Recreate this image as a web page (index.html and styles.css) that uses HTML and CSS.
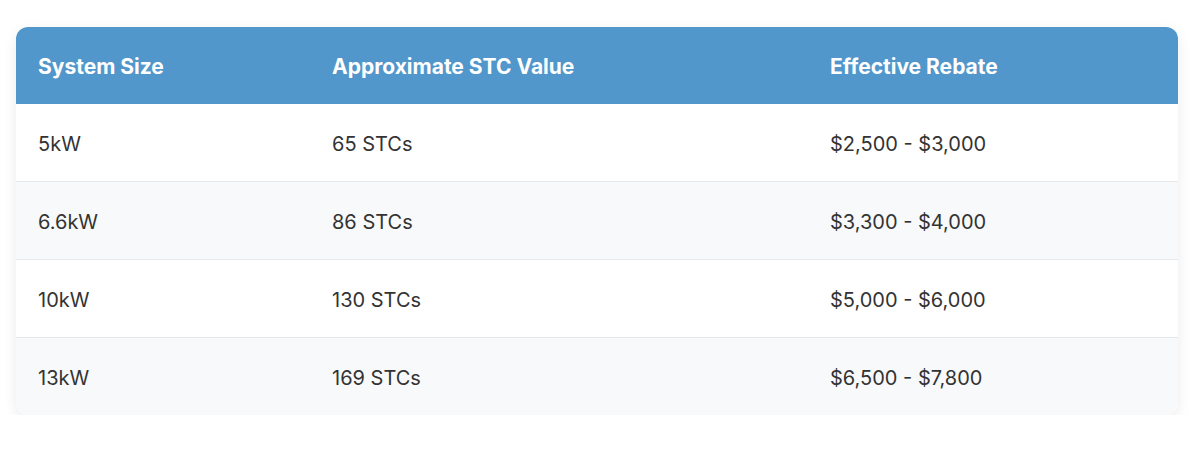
FILE: index.html
```html
<!DOCTYPE html>
<html>
<head>
<meta charset="utf-8">
<link rel="stylesheet" href="styles.css">
</head>
<body>
<div class="table-wrap">
  <table class="rebate-table">
    <thead>
      <tr>
        <th class="col-size">System Size</th>
        <th class="col-stc">Approximate STC Value</th>
        <th class="col-rebate">Effective Rebate</th>
      </tr>
    </thead>
    <tbody>
      <tr><td>5kW</td><td>65 STCs</td><td>$2,500 - $3,000</td></tr>
      <tr><td>6.6kW</td><td>86 STCs</td><td>$3,300 - $4,000</td></tr>
      <tr><td>10kW</td><td>130 STCs</td><td>$5,000 - $6,000</td></tr>
      <tr><td>13kW</td><td>169 STCs</td><td>$6,500 - $7,800</td></tr>
    </tbody>
  </table>
</div>
</body>
</html>
```

FILE: styles.css
```css
html, body {
  margin: 0;
  padding: 0;
  background: #ffffff;
}
body {
  padding: 27px 18px 0 16px;
  font-family: Inter, "Noto Sans", "Liberation Sans", sans-serif;
}
.table-wrap {
  border-radius: 12px;
  overflow: hidden;
  box-shadow: 0 4px 14px rgba(0, 0, 0, 0.08);
}
.rebate-table {
  width: 100%;
  border-collapse: collapse;
  table-layout: fixed;
}
.rebate-table th,
.rebate-table td {
  box-sizing: border-box;
}
.col-size { width: 294px; }
.col-stc { width: 498px; }
.rebate-table th {
  background: #5197cb;
  color: #ffffff;
  font-weight: 700;
  font-size: 21px;
  text-align: left;
  padding: 2px 22px 0;
  height: 77px;
}
.rebate-table td {
  color: #333333;
  font-size: 20px;
  padding: 3px 22px 0;
  height: 78px;
  border-top: 1px solid #e6e9ec;
}
.rebate-table tbody tr:first-child td {
  border-top: none;
  height: 77px;
}
.rebate-table tbody tr:nth-child(even) td {
  background: #f8f9fa;
}
```
